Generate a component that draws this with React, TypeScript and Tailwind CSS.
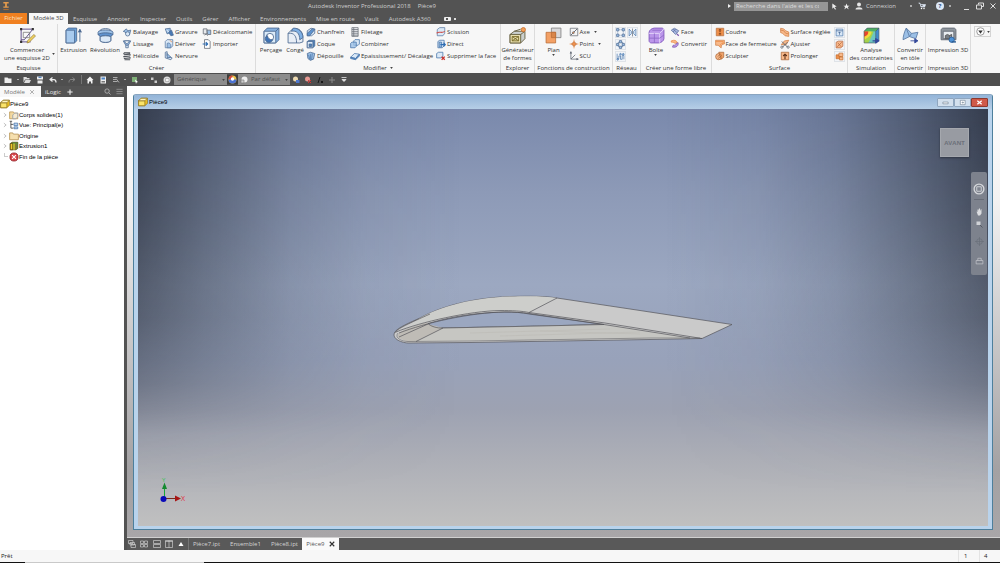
import type { ReactNode } from "react";

/* ---------- icon palette and helpers ---------- */

const NAVY = "#4a6890";
const BLUE = "#9cc0e6";
const PALE = "#dbe9f7";
const ORANGE = "#ee8f4a";
const PEACH = "#f8b98a";

function Svg({ size = "size-[10px]", children }: { size?: string; children: ReactNode }) {
  return (
    <svg viewBox="0 0 16 16" className={`${size} shrink-0`} fill="none" strokeWidth="1.2" strokeLinejoin="round" aria-hidden="true">
      {children}
    </svg>
  );
}

const icons: Record<string, ReactNode> = {
  sweep: (
    <g stroke={NAVY}>
      <path d="M2 7l5-4 2 3 5-1-2 7-5-1-2-3z" fill={BLUE} />
      <circle cx="9" cy="11" r="3.4" fill={PALE} />
    </g>
  ),
  loft: (
    <g stroke={NAVY}>
      <path d="M2 3h12l-4 7H6z" fill={BLUE} />
      <path d="M4 3h8l-3 4H6z" fill="#fff" />
      <path d="M6 10h4v4H6z" fill={PALE} />
    </g>
  ),
  coil: (
    <g stroke="#50555c" strokeWidth="1.7">
      <path d="M3 3h10M3 6l10-1M3 9l10-1M3 12l10-1M4 14h9" />
      <path d="M3 3v2M13 5v2M3 8v2M13 10v2" />
    </g>
  ),
  emboss: (
    <g stroke={NAVY}>
      <path d="M2 3l8-1v7l-5 2z" fill={BLUE} />
      <path d="M7 8l5-3 3 8-4 1z" fill="#4879b6" />
      <path d="M4 5l4 3" stroke="#fff" />
    </g>
  ),
  derive: (
    <g stroke="#5a7aa3">
      <path d="M2 4l3-3h9v10l-3 3H2z" fill={PALE} />
      <path d="M5 7a4 4 0 0 1 6 4v3H5z" fill={BLUE} />
      <path d="M9 2l4 3" stroke={ORANGE} />
    </g>
  ),
  rib: (
    <g stroke={NAVY}>
      <path d="M2 2l3-1v7l8 3-2 3-9-3z" fill={PALE} />
      <path d="M5 4l6 6-6 1z" fill={BLUE} />
    </g>
  ),
  decal: (
    <g stroke="#5f6670">
      <path d="M2 3h6v8H2z" fill="#e7e9ec" />
      <path d="M8 5h6v7H9z" fill={BLUE} />
      <path d="M4 13l3-2 2 3" />
    </g>
  ),
  import: (
    <g stroke="#5f6670">
      <path d="M4 1h6l3 3v11H4z" fill="#fff" />
      <path d="M1 8h7M6 5l3 3-3 3" stroke="#2e6db4" strokeWidth="1.8" />
    </g>
  ),
  chamfer: (
    <g stroke={NAVY}>
      <path d="M2 6l6-4 6 1v7l-5 4H2z" fill={PALE} />
      <path d="M2 10L10 3l4 1-8 10H2z" fill="#5f93cf" />
    </g>
  ),
  shell: (
    <g stroke={NAVY}>
      <path d="M2 4l3-2h9v9l-3 3H2z" fill="#4f82bd" />
      <path d="M2 4h9v10H2z" fill={PALE} />
      <path d="M5 8h4v4H5z" fill="#4f82bd" />
    </g>
  ),
  draft: (
    <g stroke={NAVY}>
      <path d="M2 4l5-2 7 2-2 9-5 2-4-3z" fill={BLUE} />
      <path d="M7 5v9M10 4l-1 10M4 6l2 7" stroke="#4673a8" />
    </g>
  ),
  thread: (
    <g stroke="#6a6f77">
      <path d="M3 1h10v14H3z" fill="#e9ebee" />
      <path d="M3 4h10M3 7h10M3 10h10M3 13h10" />
      <path d="M6 1v14" />
    </g>
  ),
  combine: (
    <g stroke="#4673a8">
      <path d="M6 3l2-2h7v7l-2 2H6z" fill={PALE} />
      <path d="M1 7l2-2h7v7l-2 2H1z" fill={BLUE} fillOpacity=".8" />
    </g>
  ),
  thicken: (
    <g stroke="#4673a8">
      <path d="M1 10l6-6 8 1-6 7z" fill={PALE} />
      <path d="M1 10l8 2 6-7v3l-6 6-8-2z" fill="#5f93cf" />
    </g>
  ),
  split: (
    <g stroke="#5a7aa3">
      <path d="M2 4l4-3h8v9l-3 4H2z" fill={PALE} />
      <path d="M1 10c4-4 8 1 13-3" stroke="#d0504a" strokeWidth="1.800" />
    </g>
  ),
  direct: (
    <g stroke="#4673a8">
      <path d="M3 4l3-2h7v9l-3 3H3z" fill={PALE} />
      <path d="M5 5h4v8H5z" fill={BLUE} />
      <path d="M7 9h8M12 6l3 3-3 3" stroke="#2e6db4" strokeWidth="1.700" />
    </g>
  ),
  delFace: (
    <g stroke="#4673a8">
      <path d="M1 4l3-2h7v7l-3 2H1z" fill={PALE} />
      <path d="M9 9l5 5M14 9l-5 5" stroke="#c9302c" strokeWidth="2" />
    </g>
  ),
  axis: (
    <g stroke="#6a6f77">
      <path d="M2 2h12v12H2z" fill="#f4f5f6" />
      <path d="M3 13L13 3" strokeWidth="1.600" />
      <circle cx="7" cy="9" r="1.500" fill={ORANGE} />
    </g>
  ),
  point: (
    <g stroke={ORANGE}>
      <path d="M8 1v14M1 8h14" />
      <path d="M8 4l4 4-4 4-4-4z" fill={ORANGE} stroke="#b87040" />
    </g>
  ),
  ucs: (
    <g stroke="#5f6670">
      <path d="M3 2v11h11M3 13l7-7" />
      <path d="M2 4l1-3 1 3M12 12l3 1-3 1" fill="#5f6670" />
    </g>
  ),
  rect: (
    <g stroke={NAVY}>
      <path d="M1 1h4v4H1zM11 1h4v4h-4zM1 11h4v4H1zM11 11h4v4h-4z" fill={BLUE} />
      <path d="M6 3h4M3 6v4M13 6v4M6 13h4" strokeDasharray="1.500 1" />
    </g>
  ),
  mirror: (
    <g stroke="#4673a8">
      <path d="M2 2l4 4v4l-4 4zM14 2l-4 4v4l4 4z" fill={PALE} />
      <path d="M8 1v14" stroke="#5f6670" />
    </g>
  ),
  circ: (
    <g stroke={NAVY}>
      <circle cx="8" cy="8" r="5" />
      <path d="M6 1h4v4H6zM6 11h4v4H6zM1 6h4v4H1zM11 6h4v4h-4z" fill={BLUE} />
    </g>
  ),
  sketchPat: (
    <g stroke="#4673a8">
      <path d="M2 3v9h3V7h3v6h3V6h3v7" />
      <circle cx="3" cy="13" r="1.500" fill={BLUE} />
      <circle cx="13" cy="4" r="1.500" fill={BLUE} />
      <circle cx="8" cy="4" r="1.500" fill={BLUE} />
    </g>
  ),
  ffFace: (
    <g stroke="#5b6f9f">
      <path d="M2 5l5-3 7 4-5 6z" fill="#aab9e2" />
      <path d="M5 3l6 6M9 3L5 8" />
      <path d="M11 11l3 3" stroke="#7a55b0" strokeWidth="2" />
    </g>
  ),
  ffConvert: (
    <g>
      <path d="M2 3c5-2 8-1 10 3l-4 1C6 5 4 5 2 5z" fill={PEACH} stroke={ORANGE} />
      <path d="M13 6c1 5-3 8-9 7l1-3c4 0 5-1 5-3z" fill="#b998e6" stroke="#7a55b0" />
    </g>
  ),
  stitch: (
    <g stroke="#b87040">
      <path d="M2 2h12v12H2z" fill={ORANGE} />
      <path d="M8 3v10" stroke="#7b3f18" strokeWidth="1.800" strokeDasharray="2 1" />
      <path d="M6 5h4M6 11h4" stroke="#7b3f18" />
    </g>
  ),
  patch: (
    <g stroke="#d08048">
      <path d="M1 2h14v6c-4 0-5 2-5 6-3-1-3-3-5-4H1z" fill={PEACH} />
      <path d="M1 4h12v3c-4 0-5 2-5 5" stroke={ORANGE} />
    </g>
  ),
  sculpt: (
    <g stroke="#a9683a">
      <circle cx="6" cy="9" r="5" fill={PEACH} />
      <path d="M6 2h8v8l-4 3z" fill={ORANGE} fillOpacity=".8" />
      <path d="M4 9l5-4M5 12l6-5" />
    </g>
  ),
  ruled: (
    <g stroke="#d08048">
      <path d="M1 2l5 1 3 3 5 2v7l-6-1-4-4-3-1z" fill={PEACH} />
      <path d="M1 5l5 1 3 4 5 1" />
    </g>
  ),
  trim: (
    <g stroke="#5f6670">
      <path d="M2 9l5-6 7-1-4 7z" fill={PEACH} stroke="#d08048" />
      <path d="M3 4l9 9M12 5l-8 8" strokeWidth="1.500" />
      <circle cx="3" cy="13" r="1.800" />
      <circle cx="13" cy="13" r="1.800" />
    </g>
  ),
  extend: (
    <g stroke="#a9683a">
      <path d="M2 2h12v12H2z" fill={PEACH} />
      <path d="M8 13V5M5 8l3-3 3 3" stroke="#5b3018" strokeWidth="1.700" />
    </g>
  ),
  replace: (
    <g stroke="#4673a8">
      <path d="M2 2h12v12H2z" fill={PALE} />
      <path d="M2 5h12M8 12V7M6 9l2-2 2 2" stroke="#3a5c8c" />
    </g>
  ),
  repair: (
    <g stroke="#b0603a">
      <path d="M2 4l4-2h8v9l-4 3H2z" fill={PEACH} />
      <path d="M4 12l8-8M5 5l6 7" />
    </g>
  ),
  fit: (
    <g stroke="#c06a2a">
      <path d="M2 5h8v7H2z" fill={ORANGE} />
      <path d="M7 2h7v6H7zM8 9h6v5H8z" fill={PEACH} />
    </g>
  ),
};

const Small = ({ name }: { name: string }) => <Svg>{icons[name]}</Svg>;

/* ---------- large ribbon icons ---------- */

const big: Record<string, ReactNode> = {
  sketch: (
    <>
      <path d="M2 2h11M2 2v12h9M13 2L5 12H2" stroke="#5b4a86" strokeWidth=".9" />
      <path d="M4 5h6v5H4z" stroke="#777" strokeWidth=".7" />
      <path d="M8 13l6-6 1.500 1.500-6 6-2 .5z" fill="#f0d060" stroke="#8a7430" strokeWidth=".6" />
      <path d="M1 1h2v2H1zM12 1h2v2h-2zM1 13h2v2H1z" fill="#333" />
    </>
  ),
  extrude: (
    <g stroke={NAVY} strokeWidth=".8">
      <path d="M1 3l2-2h8v12l-2 2H1z" fill="#6ea4da" />
      <path d="M1 3h8v12H1z" fill="#a9cbee" />
      <path d="M14 14V3M12.500 5L14 2l1.500 3" fill={NAVY} />
    </g>
  ),
  revolve: (
    <g stroke={NAVY} strokeWidth=".8">
      <path d="M1 5c0-3 14-3 14 0v2l-2 1v5c-2 2-8 2-10 0V8L1 7z" fill={BLUE} />
      <path d="M1 7c3-2 11-2 14 0l-2 2c-3-1-7-1-10 0z" fill="#5f93cf" />
      <path d="M3 9c3-1 7-1 10 0v4c-2 2-8 2-10 0z" fill={PALE} />
      <path d="M3 3c2-2 8-2 10 0" />
    </g>
  ),
  hole: (
    <g stroke={NAVY} strokeWidth=".8">
      <path d="M1 4l3-3h11v11l-3 3H1z" fill="#86b0de" />
      <path d="M1 4h11v11H1z" fill="#dcebf8" />
      <path d="M12 4l3-3" />
      <circle cx="6.500" cy="9.500" r="3.500" fill="#fff" />
      <path d="M4 8a3.500 3.500 0 1 0 5 4c-3 0-4-1-5-4z" fill="#3f73b5" />
    </g>
  ),
  fillet: (
    <g stroke={NAVY} strokeWidth=".8">
      <path d="M1 6l4-4c6-2 10 2 10 8v4l-3 1H1z" fill="#e8eef6" />
      <path d="M4 4c5-1 8 2 8 8l3-2C15 5 11 1 6 1z" fill="#7fb0e4" />
      <path d="M1 6c6-1 8 3 8 9" />
    </g>
  ),
  shapeGen: (
    <g stroke="#5c5533" strokeWidth=".8">
      <path d="M1 7l4-3h10v7l-4 4H1z" fill="#cbd0cf" />
      <path d="M1 7h10v8H1zM11 7l4-3" fill="#e8dfae" />
      <path d="M3 9h6v4H3zM3 9l6 4M9 9l-6 4" stroke="#746520" />
      <circle cx="13.500" cy="2.500" r="2" fill="#f2a05a" stroke="#c9702f" />
      <path d="M5 4l6-2" />
    </g>
  ),
  plane: (
    <g strokeWidth=".7">
      <path d="M6 1h9v9H6z" fill="#d9d9db" stroke="#777" />
      <path d="M1 5h9v10H1z" fill="#f3a065" stroke="#b76a33" />
      <path d="M6 5h4v5H6z" fill="#d98549" stroke="#b76a33" />
    </g>
  ),
  box: (
    <g stroke="#7d55bb" strokeWidth=".8">
      <path d="M1 5c0-2 3-4 5-4h7c1 0 2 1 2 2v8c0 2-3 4-5 4H3c-1 0-2-1-2-2z" fill="#bb96ea" />
      <path d="M1 6h9c1 0 1 1 1 2v7M11 6l4-4" stroke="#eadffb" />
      <path d="M6 6v9M1 10.500h10l4-3M4 3h9" stroke="#8e68c8" />
    </g>
  ),
  stress: (
    <>
      <path d="M1 4l3-3h11v11l-3 3H1z" fill="#3f8ccf" />
      <path d="M1 4h11v11H1z" fill="#6cc6c0" />
      <path d="M1 4h9c-1 4-3 7-5 11H1z" fill="#a6d34b" />
      <path d="M1 4h7c0 4-3 6-7 8z" fill="#f5d83b" />
      <path d="M1 4h4c0 3-1 4-4 5z" fill="#e8452c" />
      <path d="M4 1h11l-3 3H1z" fill="#4fae63" />
      <path d="M1 4l3-3h11v11l-3 3H1zM12 4v11M12 4l3-3" stroke="#4d5a66" strokeWidth=".6" />
      <path d="M9 13h5M12 11l3 2-3 2z" fill="#34489a" stroke="#34489a" />
    </>
  ),
  sheet: (
    <g strokeWidth=".8">
      <path d="M1 12c0-3 1-7 3-11l5 5 6-1-2 6-6-2z" fill={BLUE} stroke="#5a7aa3" />
      <path d="M4 1l3 8M9 6l-2 3" stroke="#5a7aa3" />
      <path d="M8 13h5M12 11l3 2-3 2z" fill="#34489a" stroke="#34489a" />
    </g>
  ),
  print: (
    <g strokeWidth=".8">
      <path d="M1 3c0-1 1-2 2-2h10c1 0 2 1 2 2v9H1z" fill="#8f969d" stroke="#5f6670" />
      <path d="M3 4h10v7H3z" fill="#e9edf1" stroke="#5f6670" />
      <path d="M5 11V8l2-1 2 1v3zM9 8l2-1v4" fill="#777d84" stroke="#555" />
      <circle cx="11" cy="12" r="2.500" fill="#4f93d8" stroke="#2e5f96" />
      <path d="M11 14h4" stroke="#2e5f96" strokeWidth="1.400" />
    </g>
  ),
};

/* ---------- ribbon building blocks ---------- */

function Caret() {
  return (
    <svg viewBox="0 0 4 3" className="h-[2px] w-[3px] shrink-0" aria-hidden="true">
      <path d="M0 0h4L2 3z" fill="#444" />
    </svg>
  );
}

function Large({ icon, lines, width = "w-[30px]", caret = false }: { icon: string; lines: string[]; width?: string; caret?: boolean }) {
  return (
    <button type="button" className={`${width} flex shrink-0 flex-col items-center gap-[2px] pt-[3px] whitespace-nowrap`}>
      <Svg size="size-[17px]">{big[icon]}</Svg>
      <span className="flex flex-col items-center leading-[8px]">
        {lines.map((l) => (
          <span key={l}>{l}</span>
        ))}
        {caret && <Caret />}
      </span>
    </button>
  );
}

type Item = [icon: string, label: string, caret?: boolean];

function Column({ items, width = "" }: { items: Item[]; width?: string }) {
  return (
    <div className={`${width} flex shrink-0 flex-col pt-[2px]`}>
      {items.map(([icon, label, caret]) => (
        <button key={label} type="button" className="flex h-3 items-center gap-[1px] whitespace-nowrap">
          <Small name={icon} />
          <span>{label}</span>
          {caret && (
            <span className="ml-[3px] flex">
              <Caret />
            </span>
          )}
        </button>
      ))}
    </div>
  );
}

function Toggle({ icon, label }: { icon: string; label: string }) {
  return (
    <button type="button" aria-label={label} className="flex h-[11px] w-[11px] items-center justify-center border border-[#dfe3e8] bg-[#f2f5f9]">
      <Svg size="size-[9px]">{icons[icon]}</Svg>
    </button>
  );
}

function Group({ title, width, caret = false, children }: { title: string; width: string; caret?: boolean; children: ReactNode }) {
  return (
    <section className={`${width} flex shrink-0 flex-col border-r border-[#dcdcdc]`}>
      <div className="flex flex-1 justify-center">{children}</div>
      <h2 className="mb-[1px] flex items-center justify-center gap-[3px] leading-[8px] whitespace-nowrap">
        {title}
        {caret && <Caret />}
      </h2>
    </section>
  );
}

function Ribbon() {
  return (
    <div className="flex h-[49px] shrink-0 overflow-hidden bg-[#f7f7f7] text-[#333]">
      <Group title="Esquisse" width="w-[58px]">
        <Large icon="sketch" lines={["Commencer", "une esquisse 2D"]} width="w-[50px]" />
        <span className="mt-[29px]">
          <Caret />
        </span>
      </Group>
      <Group title="Créer" width="w-[198px]">
        <Large icon="extrude" lines={["Extrusion"]} width="w-[29px]" />
        <Large icon="revolve" lines={["Révolution"]} width="w-[34px]" />
        <Column width="w-[42px]" items={[["sweep", "Balayage"], ["loft", "Lissage"], ["coil", "Hélicoïde"]]} />
        <Column width="w-[38px]" items={[["emboss", "Gravure"], ["derive", "Dériver"], ["rib", "Nervure"]]} />
        <Column width="w-[52px]" items={[["decal", "Décalcomanie"], ["import", "Importer"]]} />
      </Group>
      <Group title="Modifier" width="w-[245px]" caret>
        <Large icon="hole" lines={["Perçage"]} width="w-[26px]" />
        <Large icon="fillet" lines={["Congé"]} width="w-[22px]" />
        <Column width="w-[44px]" items={[["chamfer", "Chanfrein"], ["shell", "Coque"], ["draft", "Dépouille"]]} />
        <Column width="w-[86px]" items={[["thread", "Filetage"], ["combine", "Combiner"], ["thicken", "Epaississement/ Décalage"]]} />
        <Column width="w-[62px]" items={[["split", "Scission"], ["direct", "Direct"], ["delFace", "Supprimer la face"]]} />
      </Group>
      <Group title="Explorer" width="w-[34px]">
        <Large icon="shapeGen" lines={["Générateur", "de formes"]} />
      </Group>
      <Group title="Fonctions de construction" width="w-[78px]">
        <Large icon="plane" lines={["Plan"]} caret />
        <Column width="w-[40px]" items={[["axis", "Axe", true], ["point", "Point", true], ["ucs", "SCU"]]} />
      </Group>
      <Group title="Réseau" width="w-[28px]">
        <div className="grid auto-rows-[12px] grid-cols-2 gap-x-[1px] pt-[3px]">
          <Toggle icon="rect" label="Réseau rectangulaire" />
          <Toggle icon="mirror" label="Symétrie" />
          <span className="col-span-2">
            <Toggle icon="circ" label="Réseau circulaire" />
          </span>
          <Toggle icon="sketchPat" label="Réseau commandé par esquisse" />
        </div>
      </Group>
      <Group title="Créer une forme libre" width="w-[71px]">
        <Large icon="box" lines={["Boîte"]} width="w-[28px]" caret />
        <Column width="w-[40px]" items={[["ffFace", "Face"], ["ffConvert", "Convertir"]]} />
      </Group>
      <Group title="Surface" width="w-[136px]">
        <Column width="w-[65px]" items={[["stitch", "Coudre"], ["patch", "Face de fermeture"], ["sculpt", "Sculpter"]]} />
        <Column width="w-[54px]" items={[["ruled", "Surface réglée"], ["trim", "Ajuster"], ["extend", "Prolonger"]]} />
        <div className="grid auto-rows-[12px] pt-[3px]">
          <Toggle icon="replace" label="Remplacer la face" />
          <Toggle icon="repair" label="Réparer les corps" />
          <Toggle icon="fit" label="Ajuster la face" />
        </div>
      </Group>
      <Group title="Simulation" width="w-[47px]">
        <Large icon="stress" lines={["Analyse", "des contraintes"]} width="w-[44px]" />
      </Group>
      <Group title="Convertir" width="w-[31px]">
        <Large icon="sheet" lines={["Convertir", "en tôle"]} />
      </Group>
      <Group title="Impression 3D" width="w-[45px]">
        <Large icon="print" lines={["Impression 3D"]} width="w-[42px]" />
      </Group>
      <button type="button" aria-label="Options du ruban" className="mt-[2px] ml-[3px] flex h-[11px] w-[17px] items-center justify-center gap-[2px] border border-[#d4d4d4]">
        <svg viewBox="0 0 10 10" className="size-[9px]" aria-hidden="true">
          <circle cx="5" cy="5" r="4.200" fill="#fff" stroke="#777" strokeWidth=".8" />
          <path d="M2.500 4h5L5 7.500z" fill="#333" />
        </svg>
        <Caret />
      </button>
    </div>
  );
}

/* ---------- title bar and tabs ---------- */

function TitleBar() {
  return (
    <header className="grid h-3 shrink-0 grid-cols-[308px_auto_1fr] items-center text-[#d0d0d0]">
      <svg viewBox="0 0 12 14" className="ml-[2px] h-3 w-[8px]" aria-hidden="true">
        <path d="M2 1h8v2.200H7.300v4.600H10V9.600H2V7.800h2.700V3.200H2z" fill="#e39a4d" />
        <path d="M2 11.500h8v1.600H2z" fill="#a86a33" />
      </svg>
      <h1 className="flex gap-[7px] leading-[8px]">
        <span>Autodesk Inventor Professional 2018</span>
        <span>Pièce9</span>
      </h1>
      <div className="flex items-center justify-end pr-[3px]">
        <svg viewBox="0 0 3 4" className="mr-[3px] h-[4px] w-[3px]" aria-hidden="true">
          <path d="M0 0v4l3-2z" fill="#eee" />
        </svg>
        <input
          type="search"
          aria-label="Recherche dans l'aide"
          defaultValue="Recherche dans l'aide et les commandes"
          className="h-[9px] w-[94px] rounded-none bg-[#969696] pl-[2px] leading-[9px] text-[#dcdcdc] outline-none"
        />
        <button type="button" aria-label="Rechercher" className="ml-[3px]">
          <Svg size="size-[7px]">
            <path d="M3 1l10 7-5 1 4 5-3 1-3-5-3 3z" fill="#eee" />
          </Svg>
        </button>
        <button type="button" aria-label="Favoris" className="ml-[5px]">
          <Svg size="size-[7px]">
            <path d="M8 1l2 5h5l-4 3 2 6-5-4-5 4 2-6-4-3h5z" fill="#eee" />
          </Svg>
        </button>
        <button type="button" className="ml-[5px] flex items-center gap-[3px] leading-[8px]">
          <Svg size="size-[8px]">
            <circle cx="8" cy="5" r="4" fill="#e6e6e6" />
            <path d="M1 15c0-6 14-6 14 0z" fill="#e6e6e6" />
          </Svg>
          Connexion
        </button>
        <span className="ml-[14px] h-[2px] w-[2px] bg-[#aaa]" />
        <button type="button" aria-label="Boutique" className="ml-[6px]">
          <Svg size="size-[8px]">
            <path d="M1 2h3l2 8h8M5 5h10l-1 4H6z" fill="#dfe8f5" stroke="#dfe8f5" />
            <circle cx="7" cy="13" r="1.500" fill="#fff" />
            <circle cx="12" cy="13" r="1.500" fill="#fff" />
          </Svg>
        </button>
        <button type="button" aria-label="Aide" className="ml-[10px] flex size-[8px] items-center justify-center rounded-full bg-[#dbe7f6] leading-[8px] font-bold text-[#2c4f86]">
          ?
        </button>
        <span className="ml-[5px] h-[2px] w-[2px] bg-[#aaa]" />
        <button type="button" aria-label="Réduire" className="ml-[13px] flex h-[8px] w-[6px] items-end">
          <span className="h-[1px] w-[5px] bg-[#ddd]" />
        </button>
        <button type="button" aria-label="Restaurer" className="ml-[6px]">
          <Svg size="size-[8px]">
            <path d="M5 5V2h10v7h-4M1 6h10v8H1z" stroke="#ddd" strokeWidth="2" />
          </Svg>
        </button>
        <button type="button" aria-label="Fermer" className="ml-[5px]">
          <Svg size="size-[8px]">
            <path d="M3 3l10 10M13 3L3 13" stroke="#ddd" strokeWidth="2" />
          </Svg>
        </button>
      </div>
    </header>
  );
}

const tabs = ["Esquisse", "Annoter", "Inspecter", "Outils", "Gérer", "Afficher", "Environnements", "Mise en route", "Vault", "Autodesk A360"];

function TabRow() {
  return (
    <nav className="flex h-3 shrink-0 items-stretch pt-[1px] leading-[11px] whitespace-nowrap text-[#cecece]">
      <button type="button" className="w-[27px] bg-[#f08020] text-[#fbe3c8]">
        Fichier
      </button>
      <button type="button" className="ml-[2px] w-[39px] bg-[#f7f7f7] text-[#444]">
        Modèle 3D
      </button>
      <div className="ml-[5px] flex gap-[10px] pt-[1px]">
        {tabs.map((t) => (
          <button key={t} type="button">
            {t}
          </button>
        ))}
      </div>
      <button type="button" aria-label="Affichage du ruban" className="ml-[13px] flex items-center gap-[3px] pt-[1px]">
        <span className="flex h-[4px] w-[7px] items-center justify-center rounded-[1px] bg-[#eee]">
          <span className="size-[2px] bg-[#555]" />
        </span>
        <span className="h-[2px] w-[2px] bg-[#ddd]" />
      </button>
    </nav>
  );
}

/* ---------- quick access bar ---------- */

function Dot() {
  return <span className="h-[1px] w-[2px] shrink-0 bg-[#aaa]" />;
}

function Tool({ label, children }: { label: string; children: ReactNode }) {
  return (
    <button type="button" aria-label={label}>
      <Svg size="size-[8px]">{children}</Svg>
    </button>
  );
}

function QuickAccess() {
  return (
    <div className="flex h-[13px] shrink-0 items-center bg-[#4f4f4f] pl-[4px] text-[#505050]">
      <div className="flex w-[170px] items-center justify-between pr-[3px]">
        <Tool label="Nouveau">
          <path d="M1 3h6l2 2h6v9H1z" fill="#eee" />
        </Tool>
        <Dot />
        <Tool label="Ouvrir">
          <path d="M1 2h6l1 2h5v3H4l-3 6zM5 8h11l-3 6H2z" fill="#ddd" />
        </Tool>
        <Tool label="Enregistrer">
          <path d="M2 1h12v6H2zM3 9h10v6H3z" fill="#eee" />
          <path d="M5 1h6v3H5z" fill="#5a86bb" />
        </Tool>
        <Tool label="Annuler">
          <path d="M7 3L2 7l5 4M2 7h8c3 0 4 2 4 6" stroke="#eee" strokeWidth="2.500" />
        </Tool>
        <Dot />
        <Tool label="Rétablir">
          <path d="M9 3l5 4-5 4M14 7H6c-3 0-4 2-4 6" stroke="#858585" strokeWidth="2" />
        </Tool>
        <span className="h-[9px] w-[1px] bg-[#777]" />
        <Tool label="Accueil">
          <path d="M8 1l7 7h-2v7h-3v-4H6v4H3V8H1z" fill="#f4f4f4" />
        </Tool>
        <Tool label="Vue">
          <path d="M3 1h11v14H3z" fill="#eee" />
          <path d="M5 3h7v4H5z" fill="#4f86c9" />
          <path d="M5 10h7v3H5z" fill="#777" />
        </Tool>
        <Tool label="Sélection">
          <path d="M2 3h9M2 7h7M2 11h9M8 5l6 8" stroke="#aaa" strokeWidth="2" />
        </Tool>
        <Dot />
        <Tool label="Mise à jour">
          <path d="M2 2h10v10H2z" fill="#7fb077" />
          <path d="M8 7l6 5-3 1-1 3z" fill="#fff" />
        </Tool>
        <Dot />
        <Tool label="Paramètres">
          <path d="M2 3h5v5H2zM9 9h5v5H9z" fill="#ccc" />
        </Tool>
        <Tool label="Matériau">
          <circle cx="8" cy="8" r="7" fill="#ddd" />
          <path d="M5 5h7v6H5z" fill="#f4f4f4" stroke="#999" />
        </Tool>
      </div>
      <Picker label="Matériau" value="Générique" width="w-[53px]" />
      <span className="flex w-[11px] justify-center bg-[#3d3d3d]">
        <Svg size="size-[9px]">
          <circle cx="8" cy="8" r="7" fill="#e8c24a" />
          <path d="M8 1a7 7 0 0 0-7 7h7z" fill="#d64a3f" />
          <path d="M1 8a7 7 0 0 0 14 0z" fill="#4a71d0" />
          <circle cx="8" cy="7" r="3" fill="#fff" />
        </Svg>
      </span>
      <span className="flex h-[11px] items-center bg-[#8c8c8c] pl-[2px]">
        <Svg size="size-[8px]">
          <circle cx="9" cy="7" r="6" fill="#eee" />
          <path d="M2 8h6v6H2z" fill="#ccc" stroke="#777" />
        </Svg>
      </span>
      <Picker label="Apparence" value="Par défaut" width="w-[42px]" />
      <div className="ml-[2px] flex items-center gap-[4px]">
        <Tool label="Régler l'apparence">
          <circle cx="7" cy="6" r="5" fill="#ecd9b0" />
          <path d="M8 8h7v6H8z" fill="#4f77cc" />
        </Tool>
        <Tool label="Effacer l'apparence">
          <circle cx="7" cy="6" r="5" fill="#e89a93" />
          <path d="M8 8l6 6M14 8l-6 6" stroke="#d33" strokeWidth="2" />
        </Tool>
        <Tool label="Fonction">
          <path d="M8 2L4 14M10 10l4 4M14 10l-4 4" stroke="#181818" strokeWidth="2" />
        </Tool>
        <Tool label="Ajouter">
          <path d="M8 2v12M2 8h12" stroke="#8a8a8a" strokeWidth="2" />
        </Tool>
        <Tool label="Personnaliser">
          <path d="M3 3h10M4 7h8l-4 4z" fill="#eee" stroke="#eee" strokeWidth="1.500" />
        </Tool>
      </div>
    </div>
  );
}

function Picker({ label, value, width }: { label: string; value: string; width: string }) {
  return (
    <span className={`${width} relative flex h-[11px] items-center bg-[#8c8c8c]`}>
      <select aria-label={label} className="w-full appearance-none bg-transparent pl-[3px] leading-[9px] outline-none">
        <option>{value}</option>
      </select>
      <span className="pointer-events-none absolute right-[2px]">
        <Caret />
      </span>
    </span>
  );
}

/* ---------- model browser ---------- */

function PartIcon() {
  return (
    <Svg size="size-[10px]">
      <path d="M1 6l4-4h10v8l-4 4H1z" fill="#f0c420" stroke="#8f7420" />
      <path d="M1 6h10v8H1z" fill="#fbe46a" stroke="#8f7420" />
      <path d="M1 6l4-4h10l-4 4z" fill="#fff6c0" stroke="#8f7420" />
    </Svg>
  );
}

const treeIcons: Record<string, ReactNode> = {
  "Corps solides(1)": (
    <>
      <path d="M1 3h6l1 2h6v9H1z" fill="#f3d9a0" stroke="#b8934c" />
      <path d="M6 8l3-3h5v6l-3 3H6z" fill="#f6ead0" stroke="#8c98a8" />
    </>
  ),
  "Vue: Principal(e)": (
    <>
      <path d="M3 2v11h4M3 7h4M1 2h4" stroke="#333" />
      <path d="M8 5h6v4H8zM8 11h6v3H8z" fill="#bcd4f0" stroke="#4673a8" />
    </>
  ),
  Origine: <path d="M1 3h5l1 2h8v9H1z" fill="#f6dfae" stroke="#b08a45" />,
  Extrusion1: (
    <>
      <path d="M2 4l3-2h9v10l-3 2H2z" fill="#4d9a3c" stroke="#5a4a10" />
      <path d="M2 4h4v10H2z" fill="#f2c52e" stroke="#5a4a10" />
      <path d="M8 4v10" stroke="#f2c52e" strokeWidth="2" />
      <path d="M11 4v9" stroke="#c9502c" />
    </>
  ),
  "Fin de la pièce": (
    <>
      <circle cx="8" cy="8" r="6.500" fill="#d9464c" stroke="#8e1b22" />
      <path d="M5 5l6 6M11 5l-6 6" stroke="#fff" strokeWidth="1.800" />
    </>
  ),
};

function Browser() {
  return (
    <aside className="flex w-[124px] shrink-0 flex-col bg-white text-black">
      <div className="flex h-[11px] items-center bg-[#545454] leading-[8px] text-[#e8e8e8]">
        <button type="button" className="flex h-full w-[41px] items-center justify-between bg-[#f8f8f8] pr-[6px] pl-[4px] text-[#777]">
          Modèle
          <Svg size="size-[6px]">
            <path d="M3 3l10 10M13 3L3 13" stroke="#777" strokeWidth="1.500" />
          </Svg>
        </button>
        <button type="button" className="ml-[4px]">
          iLogic
        </button>
        <button type="button" aria-label="Ajouter un onglet" className="ml-[6px]">
          <Svg size="size-[6px]">
            <path d="M8 1v14M1 8h14" stroke="#eee" strokeWidth="3" />
          </Svg>
        </button>
        <button type="button" aria-label="Rechercher" className="ml-auto">
          <Svg size="size-[7px]">
            <circle cx="7" cy="7" r="5" stroke="#bbb" strokeWidth="1.800" />
            <path d="M11 11l4 4" stroke="#bbb" strokeWidth="1.800" />
          </Svg>
        </button>
        <button type="button" aria-label="Menu" className="mr-[1px] ml-[5px]">
          <Svg size="size-[7px]">
            <path d="M1 3h14M1 8h14M1 13h14" stroke="#999" strokeWidth="1.800" />
          </Svg>
        </button>
      </div>
      <ul className="mt-[2px] grid h-[63px] grid-rows-6 font-[Liberation_Sans,sans-serif] whitespace-nowrap">
        <li className="flex items-center">
          <PartIcon />
          Pièce9
        </li>
        {Object.entries(treeIcons).map(([name, icon]) => (
          <li key={name} className="flex items-center pl-[2px]">
            <span className="flex w-[7px]">
              {name.startsWith("Fin") ? (
                <span className="mb-[4px] ml-[2px] h-[4px] w-[4px] border-b border-l border-[#ccc]" />
              ) : (
                <Svg size="size-[6px]">
                  <path d="M5 3l6 5-6 5" stroke="#999" strokeWidth="1.600" />
                </Svg>
              )}
            </span>
            <Svg>{icon}</Svg>
            <span>{name}</span>
          </li>
        ))}
      </ul>
    </aside>
  );
}

/* ---------- 3D viewport ---------- */

function Airfoil() {
  return (
    <svg viewBox="390 290 346 54" className="relative w-[346px]" role="img" aria-label="Pièce9" fill="none" stroke="#55555a" strokeWidth=".7" strokeLinejoin="round">
      <path
        d="M395 331C397 327 410 321.500 420 317C440 306 470 297 510 295.500C530 295 545 295 557 297L640 309.500L732 323.500L702 337.500L650 338.500L560 340L470 341.500L408 342C400 341.500 391 337 395 331z"
        fill="#cacaca"
      />
      <path d="M428 322.500C450 316 475 311.500 505 311C514 311 522 311.500 529 312.500L604 323.500L540 325L443 327C437 327.500 430 325 428 322.500z" fill="#9ba7c0" />
      <path d="M443 327L604 323.500L690 337L560 339L416 340.500z" fill="#c6c6c2" stroke="none" />
      <path d="M399 337C394 331 408 327 426 321L428 323L443 327L416 340.500L408 341z" fill="#bfbcb6" stroke="none" />
      <path d="M420 317C440 306 470 297 510 295.500C530 295 545 295 557 297L529 311.500C495 307 450 313 405 328z" fill="#cdcecb" stroke="none" />
      <path d="M470 332L610 328M500 335L640 331M540 330L640 333" stroke="#bab8b2" strokeWidth=".5" />
      <path d="M557 297L529 311.500M443 327L416 340.500M428 323L399 336" />
      <path d="M396 331C420 321 470 310 500 309.500C512 309.500 522 310 529 311.500L605 322L702 337.500" />
      <path d="M399 332C425 322 470 311.500 505 311C514 311 522 311.500 529 313L604 323.500L690 337" />
      <path d="M395 332C396 328 410 322 430 313" />
      <path d="M398 332C394 337 402 340.500 408 340.500L470 340L560 338.500L650 337L700 337" strokeWidth=".5" />
      <path d="M428 322.500C430 325 437 327.500 443 327L540 325L604 323.500" />
    </svg>
  );
}

function Triad() {
  return (
    <svg viewBox="158 474 32 30" className="absolute bottom-[22px] left-[20px] h-[30px] w-[32px]" aria-hidden="true">
      <path d="M164.500 499V484" stroke="#18a838" strokeWidth="1" />
      <path d="M164.500 482.500l-2.500 6.500h5z" fill="#148a30" />
      <text x="162" y="482" fontSize="6" fill="#35c452">Y</text>
      <path d="M164 498.500h12" stroke="#7a2a1c" strokeWidth="1" />
      <path d="M181 498.500l-6-3v6z" fill="#a81414" />
      <text x="181" y="501" fontSize="7" fill="#e02f3f">X</text>
      <circle cx="163.500" cy="499" r="3" fill="#0a0ab8" />
    </svg>
  );
}

function NavBar() {
  return (
    <div className="absolute top-[63px] right-[1px] flex h-[103px] w-[16px] flex-col items-center rounded-[2px] bg-[#7d828d] pt-[11px]">
      <button type="button" aria-label="Disque de navigation">
        <Svg size="size-[12px]">
          <circle cx="8" cy="8" r="6.500" stroke="#d5d7db" strokeWidth="1.800" />
          <path d="M5 5h6v6H5z" stroke="#d5d7db" />
        </Svg>
      </button>
      <span className="mt-[4px] h-[1px] w-[10px] bg-[#686d78]" />
      <button type="button" aria-label="Panoramique" className="mt-[8px]">
        <Svg size="size-[8px]">
          <path d="M3 7l2 1V3h2v3l1-5h2v5l2-4 1 1v8l-3 4H6z" fill="#dcdde0" />
        </Svg>
      </button>
      <button type="button" aria-label="Zoom" className="mt-[4px]">
        <Svg size="size-[8px]">
          <path d="M3 3h8v7H3z" fill="#d0d2d6" />
          <path d="M10 10l5 5" stroke="#555a64" strokeWidth="2" />
        </Svg>
      </button>
      <button type="button" aria-label="Orbite" className="mt-[9px]">
        <Svg size="size-[9px]">
          <circle cx="8" cy="8" r="5" stroke="#696e79" />
          <path d="M8 0v16M0 8h16" stroke="#696e79" />
        </Svg>
      </button>
      <button type="button" aria-label="Vue de face" className="mt-[10px]">
        <Svg size="size-[9px]">
          <path d="M2 8h12v6H2zM5 8V4h6v4" stroke="#c8cad0" />
        </Svg>
      </button>
    </div>
  );
}

function Viewport() {
  return (
    <div className="relative flex flex-1 items-center justify-center overflow-hidden bg-[linear-gradient(to_bottom,#7a89ac_0%,#8d9ab7_20%,#9ca8c1_42%,#98a2ba_60%,#9da2b2_72%,#adafb7_84%,#c0c0c0_100%)]">
      <div className="absolute inset-0 bg-[linear-gradient(to_right,rgba(36,42,54,0.8)_0%,rgba(40,48,62,0.55)_8%,rgba(46,56,76,0.25)_18%,rgba(46,56,76,0.08)_27%,rgba(46,56,76,0)_38%,rgba(46,56,76,0)_62%,rgba(46,56,76,0.08)_73%,rgba(46,56,76,0.25)_82%,rgba(40,48,62,0.55)_92%,rgba(36,42,54,0.8)_100%)] [mask-image:linear-gradient(to_bottom,black_0%,rgba(0,0,0,0.88)_25%,rgba(0,0,0,0.7)_50%,rgba(0,0,0,0.45)_66%,rgba(0,0,0,0.12)_78%,transparent_92%)]" />
      <Airfoil />
      <Triad />
      <button type="button" className="absolute top-[19px] right-[19px] flex size-[29px] items-center justify-center border border-[#a5a8ae] bg-[#989ba2] font-bold text-[#6d717b] shadow-[0_1px_2px_#2f3542]">
        AVANT
      </button>
      <NavBar />
    </div>
  );
}

function WindowButton({ label, tone, children }: { label: string; tone: string; children: ReactNode }) {
  return (
    <button type="button" aria-label={label} className={`${tone} flex h-[9px] w-[17px] items-center justify-center rounded-[1px] border`}>
      <Svg size="size-[7px]">{children}</Svg>
    </button>
  );
}

function DocumentWindow() {
  return (
    <div className="flex flex-1 flex-col rounded-t-[3px] border border-[#4d7f9c] border-t-[#8aa5c0] bg-[#b9d3ec] px-[4px] pb-[3px]">
      <div className="-mx-[4px] flex h-[14px] shrink-0 items-center rounded-t-[2px] bg-linear-to-b from-[#93b4d8] to-[#b6cee6] px-[4px] text-black">
        <PartIcon />
        <span className="ml-[1px] font-[Liberation_Sans,sans-serif]">Pièce9</span>
        <div className="ml-auto flex">
          <WindowButton label="Réduire" tone="border-[#8fa6bf] bg-[#d3e0ee]">
            <path d="M2 7h12v4H2z" fill="#fff" stroke="#56697e" />
          </WindowButton>
          <WindowButton label="Agrandir" tone="border-[#8fa6bf] bg-[#d3e0ee]">
            <path d="M3 3h11v10H3zM7 7h3v2H7z" fill="#fff" stroke="#56697e" />
          </WindowButton>
          <WindowButton label="Fermer" tone="border-[#8c3a30] bg-[#cf5a49]">
            <path d="M3 4l10 8M13 4L3 12" stroke="#fff" strokeWidth="3" />
          </WindowButton>
        </div>
      </div>
      <Viewport />
    </div>
  );
}

/* ---------- bottom bars ---------- */

function DocumentTabs() {
  return (
    <div className="flex h-[13px] shrink-0 items-stretch border-t border-[#d0d0d0] bg-[#595959] text-[#d4d4d4]">
      <div className="flex w-[62px] items-center justify-between border-r border-[#777] pr-[3px] pl-[1px]">
        <Tool label="Cascade">
          <path d="M1 1h9v6H1zM4 5h9v5H4zM6 9h9v6H6z" fill="#595959" stroke="#ddd" />
        </Tool>
        <Tool label="Mosaïque">
          <path d="M1 2h6v5H1zM9 2h6v5H9zM1 9h6v5H1zM9 9h6v5H9z" stroke="#ddd" />
        </Tool>
        <Tool label="Horizontal">
          <path d="M1 1h14v6H1zM1 9h14v6H1z" stroke="#ddd" />
        </Tool>
        <Tool label="Vertical">
          <path d="M1 1h14v14H1zM8 1v14M1 3h14" stroke="#ddd" />
        </Tool>
        <Tool label="Liste">
          <path d="M8 4l5 8H3z" fill="#fff" />
        </Tool>
      </div>
      <div className="flex items-center gap-[10px] px-[4px]">
        <button type="button">Pièce7.ipt</button>
        <button type="button">Ensemble1</button>
        <button type="button">Pièce8.ipt</button>
      </div>
      <button type="button" className="flex w-[37px] items-center justify-center gap-[4px] bg-[#fafafa] text-[#555]">
        Pièce9
        <Svg size="size-[6px]">
          <path d="M2 2l12 12M14 2L2 14" stroke="#333" strokeWidth="3" />
        </Svg>
      </button>
    </div>
  );
}

function StatusBar() {
  return (
    <footer className="shrink-0">
      <div className="flex h-[12px] items-center bg-[#f7f7f7] pl-[1px] text-[#222]">
        <span>Prêt</span>
        <span className="ml-auto flex h-full w-[21px] items-center border-l border-[#e4e4e4] pl-[5px]">1</span>
        <span className="flex h-full w-[21px] items-center border-l border-[#e4e4e4] pl-[4px]">4</span>
      </div>
      <div className="flex h-[1px] bg-[#111]">
        <span className="ml-[25px] w-[179px] bg-[#c9c9c9]" />
      </div>
    </footer>
  );
}

export default function App() {
  return (
    <div className="flex h-screen flex-col overflow-hidden bg-[#535353] font-['Open_Sans','Noto_Sans',sans-serif] text-[6px] leading-[8px]">
      <TitleBar />
      <TabRow />
      <Ribbon />
      <QuickAccess />
      <div className="flex min-h-0 flex-1">
        <Browser />
        <main className="ml-[3px] flex min-w-0 flex-1 flex-col">
          <div className="flex flex-1 bg-[linear-gradient(to_bottom,#ffffff_0%,#f2f2f2_25%,#a3a1a3_85%,#a8a6a8_100%)] pt-[8px] pr-[7px] pb-[7px] pl-[6px]">
            <DocumentWindow />
          </div>
          <DocumentTabs />
        </main>
      </div>
      <StatusBar />
    </div>
  );
}
